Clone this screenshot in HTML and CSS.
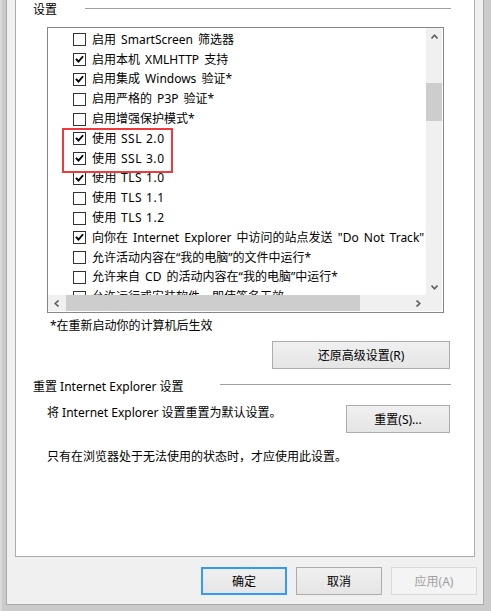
FILE: index.html
```html
<!DOCTYPE html>
<html lang="zh-CN">
<head>
<meta charset="utf-8">
<title>Internet 选项 - 高级</title>
<link rel="stylesheet" href="styles.css">
</head>
<body>
<div class="frame">
  <div class="panel">
    <div class="group-head">
      <span class="group-label first">设置</span>
      <span class="group-line"></span>
    </div>

    <div class="listbox">
      <div class="list-area">
        <div class="rows">
          <div class="row"><span class="cb"></span><span class="lbl">启用 SmartScreen 筛选器</span></div>
          <div class="row"><span class="cb on"><svg viewBox="0 0 13 13"><polyline points="3,6.5 5.3,9 10,3.5"/></svg></span><span class="lbl">启用本机 XMLHTTP 支持</span></div>
          <div class="row"><span class="cb on"><svg viewBox="0 0 13 13"><polyline points="3,6.5 5.3,9 10,3.5"/></svg></span><span class="lbl">启用集成 Windows 验证*</span></div>
          <div class="row"><span class="cb"></span><span class="lbl">启用严格的 P3P 验证*</span></div>
          <div class="row"><span class="cb"></span><span class="lbl">启用增强保护模式*</span></div>
          <div class="row"><span class="cb on"><svg viewBox="0 0 13 13"><polyline points="3,6.5 5.3,9 10,3.5"/></svg></span><span class="lbl mono">使用 SSL 2.0</span></div>
          <div class="row"><span class="cb on"><svg viewBox="0 0 13 13"><polyline points="3,6.5 5.3,9 10,3.5"/></svg></span><span class="lbl mono">使用 SSL 3.0</span></div>
          <div class="row"><span class="cb on"><svg viewBox="0 0 13 13"><polyline points="3,6.5 5.3,9 10,3.5"/></svg></span><span class="lbl mono">使用 TLS 1.0</span></div>
          <div class="row"><span class="cb"></span><span class="lbl mono">使用 TLS 1.1</span></div>
          <div class="row"><span class="cb"></span><span class="lbl mono">使用 TLS 1.2</span></div>
          <div class="row"><span class="cb on"><svg viewBox="0 0 13 13"><polyline points="3,6.5 5.3,9 10,3.5"/></svg></span><span class="lbl">向你在 Internet Explorer 中访问的站点发送 "Do Not Track"</span></div>
          <div class="row"><span class="cb"></span><span class="lbl">允许活动内容在“我的电脑”的文件中运行*</span></div>
          <div class="row"><span class="cb"></span><span class="lbl">允许来自 CD 的活动内容在“我的电脑”中运行*</span></div>
          <div class="row"><span class="cb"></span><span class="lbl">允许运行或安装软件，即使签名无效</span></div>
        </div>
        <div class="highlight"></div>
      </div>
      <div class="vscroll">
        <span class="sbtn"><svg width="7" height="5" viewBox="0 0 7 5"><polyline points="0.5,4.5 3.5,1.2 6.5,4.5"/></svg></span>
        <span class="vtrack"><span class="vthumb"></span></span>
        <span class="sbtn"><svg width="7" height="5" viewBox="0 0 7 5"><polyline points="0.5,0.5 3.5,3.8 6.5,0.5"/></svg></span>
      </div>
      <div class="hscroll">
        <span class="sbtn"><svg width="5" height="7" viewBox="0 0 5 7"><polyline points="4.5,0.5 1.2,3.5 4.5,6.5"/></svg></span>
        <span class="htrack"><span class="hthumb"></span></span>
        <span class="sbtn"><svg width="5" height="7" viewBox="0 0 5 7"><polyline points="0.5,0.5 3.8,3.5 0.5,6.5"/></svg></span>
      </div>
      <div class="corner"></div>
    </div>

    <div class="note">*在重新启动你的计算机后生效</div>

    <div class="btn-row">
      <button class="btn restore">还原高级设置(R)</button>
    </div>

    <div class="group-head second">
      <span class="group-label wide">重置 Internet Explorer 设置</span>
      <span class="group-line"></span>
    </div>

    <div class="reset-row">
      <span class="desc">将 Internet Explorer 设置重置为默认设置。</span>
      <button class="btn reset">重置(S)...</button>
    </div>

    <div class="desc last">只有在浏览器处于无法使用的状态时，才应使用此设置。</div>
  </div>

  <div class="dialog-buttons">
    <button class="btn dlg default">确定</button>
    <button class="btn dlg">取消</button>
    <button class="btn dlg disabled">应用(A)</button>
  </div>
</div>
</body>
</html>
```

FILE: styles.css
```css
* { box-sizing: border-box; }

html, body {
  margin: 0;
  padding: 0;
}

body {
  width: 491px;
  height: 611px;
  overflow: hidden;
  background: linear-gradient(90deg, #dadada 0, #dadada 2px, #cbcbcb 2px, #cbcbcb 100%);
  font-family: "Noto Sans", "Noto Sans CJK SC", sans-serif;
  font-size: 12px;
  color: #000;
}

.frame {
  margin-left: 6px;
  width: 478px;
  height: 605px;
  background: #f0f0f0;
  border-left: 1px solid #a9a9a9;
  border-right: 1px solid #a9a9a9;
  border-bottom: 1px solid #a9a9a9;
  display: flex;
  flex-direction: column;
}

.panel {
  margin-left: 8px;
  width: 460px;
  height: 557px;
  background: #fff;
  border-left: 1px solid #adadad;
  border-right: 1px solid #adadad;
  border-bottom: 1px solid #adadad;
  display: flex;
  flex-direction: column;
}

.group-head {
  display: flex;
  margin-top: 2px;
  padding-left: 17px;
  padding-right: 23px;
  height: 16px;
  line-height: 16px;
}

.group-head.second {
  margin-top: 10px;
}

.group-label.first { width: 52px; }
.group-label.wide { width: 187px; }

.group-line {
  flex: 1;
  height: 1px;
  margin-top: 6px;
  background: #a0a0a0;
}

.group-head.second .group-line { margin-top: 5px; }

.listbox {
  margin-top: 9px;
  margin-left: 31px;
  width: 397px;
  height: 286px;
  border: 1px solid #828790;
  display: grid;
  grid-template-columns: 1fr 16px 1px;
  grid-template-rows: 1fr 16px 1px;
  background: #fff;
}

.list-area {
  grid-column: 1;
  grid-row: 1;
  position: relative;
  overflow: hidden;
}

.rows {
  padding-top: 2px;
  white-space: nowrap;
}

.row {
  height: 19.8px;
  display: flex;
  align-items: center;
  padding-left: 25px;
}

.cb {
  width: 13px;
  height: 13px;
  border: 1px solid #333;
  background: #fff;
  flex: none;
  display: flex;
}

.cb svg {
  width: 11px;
  height: 11px;
  margin: 0;
}

.cb svg polyline {
  fill: none;
  stroke: #000;
  stroke-width: 2.2;
  stroke-linecap: square;
  stroke-linejoin: miter;
}

.lbl {
  margin-left: 6px;
  line-height: 16px;
  word-spacing: 2px;
}

.lbl.mono {
  letter-spacing: 0.6px;
  word-spacing: 0;
}

.highlight {
  position: absolute;
  left: 14px;
  top: 100px;
  width: 111px;
  height: 45px;
  border: 2px solid #ee3a3a;
}

.vscroll {
  grid-column: 2;
  grid-row: 1;
  background: #f0f0f0;
  display: flex;
  flex-direction: column;
}

.hscroll {
  grid-column: 1;
  grid-row: 2;
  background: #f0f0f0;
  display: flex;
}

.corner {
  grid-column: 2;
  grid-row: 2;
  background: #f0f0f0;
}

.sbtn {
  flex: none;
  width: 16px;
  height: 16px;
  display: flex;
  align-items: center;
  justify-content: center;
}

.sbtn svg polyline {
  fill: none;
  stroke: #606060;
  stroke-width: 1.6;
}

.vtrack {
  flex: 1;
  position: relative;
}

.vthumb {
  display: block;
  margin-top: 39px;
  height: 38px;
  width: 16px;
  background: #cdcdcd;
}

.htrack {
  flex: 1;
  display: flex;
}

.hthumb {
  display: block;
  margin-left: 2px;
  width: 294px;
  height: 16px;
  background: #cdcdcd;
}

.note {
  margin-top: 5px;
  margin-left: 34px;
  line-height: 16px;
}

.btn {
  font-family: "Noto Sans", "Noto Sans CJK SC", sans-serif;
  font-size: 12px;
  color: #000;
  height: 28px;
  padding: 0;
  border: 1px solid #acacac;
  background: linear-gradient(#f0f0f0, #e5e5e5);
  border-radius: 0;
}

.btn-row {
  display: flex;
  justify-content: flex-end;
  margin-top: 7px;
  padding-right: 24px;
}

.btn.restore { width: 178px; }

.reset-row {
  display: flex;
  align-items: flex-start;
  margin-top: 10px;
  padding-right: 24px;
}

.desc {
  margin-left: 31px;
  line-height: 16px;
}

.btn.reset {
  margin-left: auto;
  width: 104px;
}

.desc.last {
  margin-top: 16px;
}

.dialog-buttons {
  display: flex;
  gap: 9px;
  margin-top: 10px;
  padding-left: 194px;
}

.btn.dlg { width: 86px; }

.btn.default {
  border: 1px solid #3399ff;
  box-shadow: inset 0 0 0 1px #3399ff;
}

.btn.disabled {
  border-color: #d9d9d9;
  background: #f4f4f4;
  color: #a0a0a0;
}
```
